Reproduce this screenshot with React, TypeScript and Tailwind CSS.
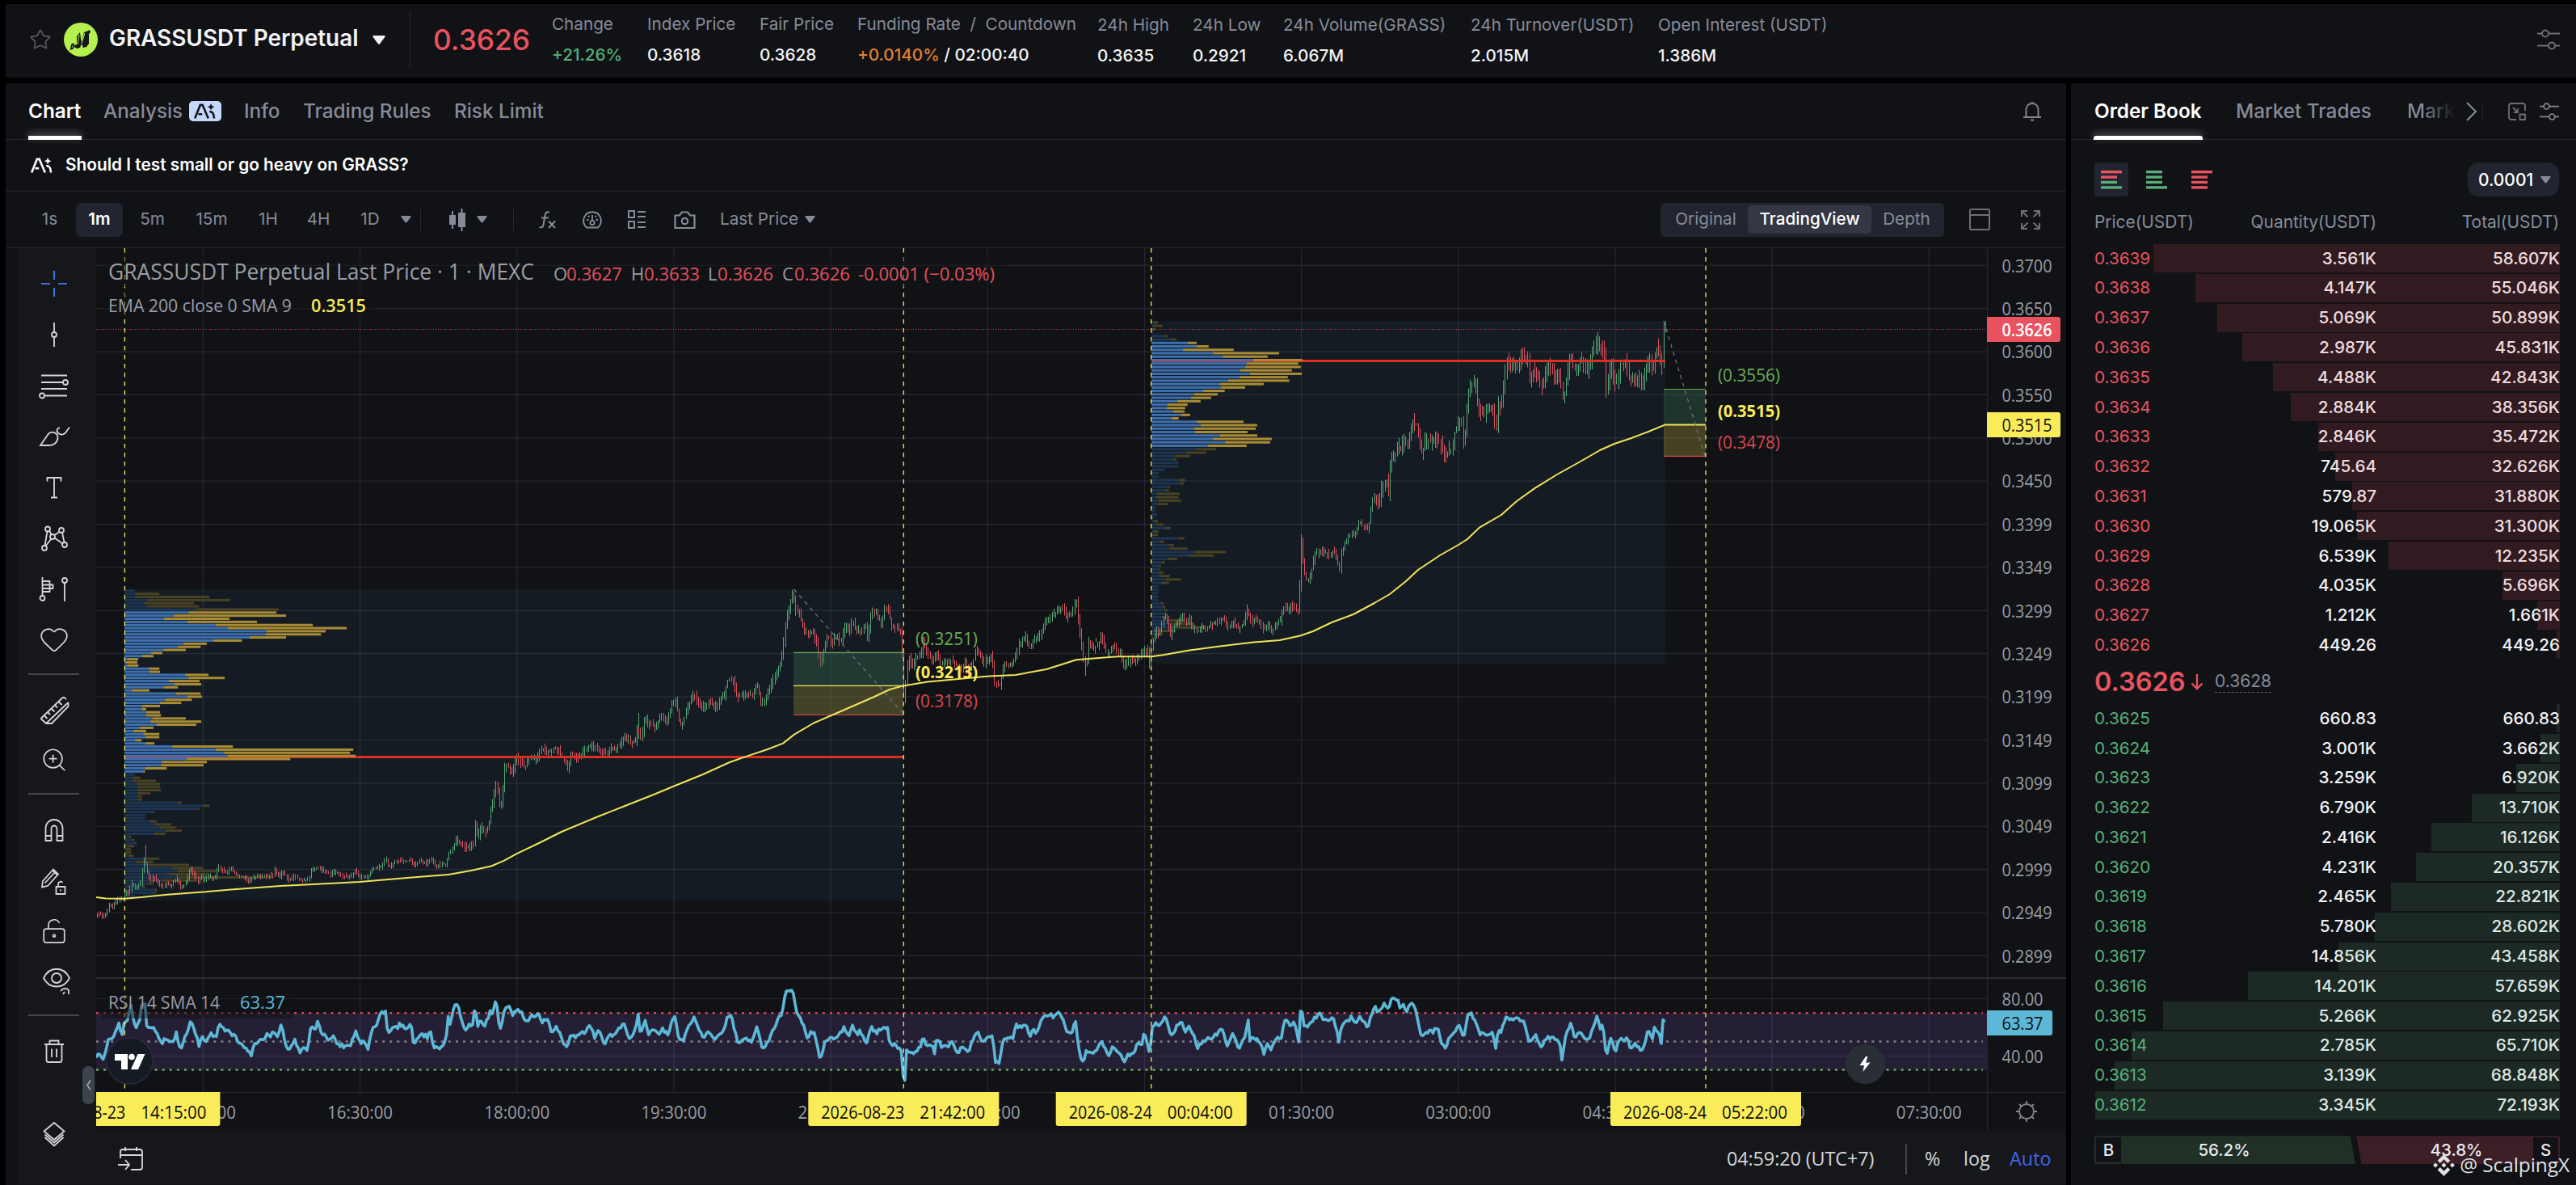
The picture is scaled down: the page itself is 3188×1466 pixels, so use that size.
import type { ReactNode } from 'react';
import { Heart, LockKeyholeOpen, Ruler, Star, ZoomIn } from 'lucide-react';
import clsx from 'clsx';

type Row = [price: string, qty: string, total: string, depth: number];
type Point = [number, number];

const STATS: { label: string; value: ReactNode; cls: string }[] = [
  { label: 'Change', value: <span className="text-[#56af78]">+21.26%</span>, cls: 'w-[118px]' },
  { label: 'Index Price', value: '0.3618', cls: 'w-[139px]' },
  { label: 'Fair Price', value: '0.3628', cls: 'w-[121px]' },
  {
    label: 'Funding Rate  /  Countdown',
    value: <><span className="text-[#e2812f]">+0.0140%</span>{' / '}02:00:40</>,
    cls: 'w-[297px]',
  },
  { label: '24h High', value: '0.3635', cls: 'w-[118px] pt-[1px]' },
  { label: '24h Low', value: '0.2921', cls: 'w-[112px] pt-[1px]' },
  { label: '24h Volume(GRASS)', value: '6.067M', cls: 'w-[232px] pt-[1px]' },
  { label: '24h Turnover(USDT)', value: '2.015M', cls: 'w-[232px] pt-[1px]' },
  { label: 'Open Interest (USDT)', value: '1.386M', cls: 'w-[260px] pt-[1px]' },
];

const INTERVALS = [
  { label: '1s', cls: 'w-[65px]' },
  { label: '1m', cls: 'w-[58px]', active: true },
  { label: '5m', cls: 'w-[73px]' },
  { label: '15m', cls: 'w-[74px]' },
  { label: '1H', cls: 'w-[66px]' },
  { label: '4H', cls: 'w-[58px]' },
  { label: '1D', cls: 'w-[70px]' },
];

const ASKS: Row[] = [
  ['0.3639', '3.561K', '58.607K', 503],
  ['0.3638', '4.147K', '55.046K', 451],
  ['0.3637', '5.069K', '50.899K', 424],
  ['0.3636', '2.987K', '45.831K', 393],
  ['0.3635', '4.488K', '42.843K', 355],
  ['0.3634', '2.884K', '38.356K', 333],
  ['0.3633', '2.846K', '35.472K', 299],
  ['0.3632', '745.64', '32.626K', 278],
  ['0.3631', '579.87', '31.880K', 257],
  ['0.3630', '19.065K', '31.300K', 251],
  ['0.3629', '6.539K', '12.235K', 212],
  ['0.3628', '4.035K', '5.696K', 71],
  ['0.3627', '1.212K', '1.661K', 28],
  ['0.3626', '449.26', '449.26', 4],
];

const BIDS: Row[] = [
  ['0.3625', '660.83', '660.83', 4],
  ['0.3624', '3.001K', '3.662K', 24],
  ['0.3623', '3.259K', '6.920K', 54],
  ['0.3622', '6.790K', '13.710K', 109],
  ['0.3621', '2.416K', '16.126K', 159],
  ['0.3620', '4.231K', '20.357K', 178],
  ['0.3619', '2.465K', '22.821K', 209],
  ['0.3618', '5.780K', '28.602K', 229],
  ['0.3617', '14.856K', '43.458K', 274],
  ['0.3616', '14.201K', '57.659K', 386],
  ['0.3615', '5.266K', '62.925K', 491],
  ['0.3614', '2.785K', '65.710K', 530],
  ['0.3613', '3.139K', '68.848K', 551],
  ['0.3612', '3.345K', '72.193K', 575],
];

/* ---------- chart data ---------- */

const parse = (s: string): Point[] =>
  s.trim().split(/\s+/).map((p) => p.split(',').map(Number) as Point);

const PRICE = parse(`
119,1132 122,1131 130,1134 133,1128 136,1119 141,1123 143,1117 149,1113 154,1112 157,1104 160,1107 164,1093 169,1100 175,1093 178,1072 180,1062 184,1082 187,1089 192,1085 196,1091 202,1097 208,1094 213,1096 220,1086 224,1100 229,1095 233,1087 237,1074 242,1084 246,1091 250,1085 254,1091 259,1085 267,1087 271,1072 278,1078 284,1080 286,1074 292,1082 302,1086 311,1090 316,1085 326,1085 339,1083 340,1076 347,1085 351,1080 359,1089 365,1085 373,1089 383,1090 386,1078 394,1074 402,1078 410,1082 414,1078 424,1084 435,1085 440,1078 446,1085 457,1085 460,1078 467,1074 472,1073 479,1064 482,1074 488,1069 495,1064 502,1066 510,1065 513,1072 520,1065 529,1069 535,1064 541,1073 547,1069 553,1070 556,1057 561,1050 566,1039 571,1044 577,1050 587,1044 589,1020 592,1037 597,1022 602,1029 605,1026 608,1007 611,992 614,973 616,966 619,996 622,998 624,975 625,953 629,946 635,956 641,938 651,951 655,938 665,940 672,926 679,930 686,926 692,928 698,938 704,951 708,931 714,937 721,933 728,926 736,923 742,928 751,933 757,927 767,925 773,913 784,920 788,916 790,900 795,915 799,885 804,896 813,900 819,886 826,896 832,873 837,868 842,893 846,896 851,878 860,860 865,870 872,876 880,869 887,877 893,866 898,860 901,843 908,840 913,863 922,860 934,859 938,845 943,870 950,863 957,843 964,830 968,819 971,795 974,765 977,755 981,738 983,735 985,755 990,759 997,785 1007,783 1012,795 1016,823 1020,808 1026,785 1030,798 1036,786 1041,795 1047,775 1052,783 1056,768 1061,780 1068,783 1071,770 1075,793 1079,758 1085,759 1092,773 1096,753 1100,755 1104,773 1111,778 1117,785 1119,865 1121,860 1123,830 1126,813 1130,825 1135,815 1141,810 1144,793 1148,808 1156,818 1160,810 1165,820 1172,818 1179,818 1186,825 1192,833 1195,815 1199,835 1204,823 1210,805 1219,820 1229,811 1232,845 1239,848 1243,825 1250,823 1257,818 1262,798 1271,788 1275,800 1281,793 1288,785 1296,765 1304,763 1311,753 1317,753 1320,764 1328,760 1333,742 1337,780 1342,815 1346,822 1348,793 1354,803 1360,798 1364,787 1369,806 1374,809 1378,798 1383,806 1388,806 1391,822 1395,824 1400,816 1405,820 1410,811 1416,806 1421,803 1424,821 1427,796 1430,787 1432,779 1435,786 1439,775 1442,761 1446,768 1450,787 1454,775 1460,771 1464,759 1468,771 1472,764 1477,777 1484,782 1488,775 1495,776 1502,772 1510,770 1516,764 1521,777 1527,770 1533,778 1540,773 1545,753 1548,764 1551,771 1554,766 1560,771 1565,780 1571,775 1576,782 1581,771 1586,768 1589,752 1593,752 1595,757 1600,749 1604,752 1609,762 1610,675 1612,665 1613,689 1615,707 1618,718 1622,716 1625,703 1628,687 1634,682 1642,685 1648,687 1652,680 1655,694 1659,705 1661,686 1665,673 1670,664 1675,659 1677,666 1680,655 1683,646 1688,652 1694,655 1697,641 1699,621 1702,614 1707,623 1712,600 1717,596 1719,614 1721,586 1724,564 1727,568 1731,550 1734,557 1739,546 1743,553 1746,532 1750,520 1753,528 1755,525 1757,543 1761,564 1765,546 1770,546 1776,545 1782,545 1786,557 1790,566 1794,557 1797,557 1801,536 1805,528 1809,514 1812,550 1815,528 1817,500 1820,479 1824,479 1827,471 1829,493 1832,511 1837,514 1843,509 1848,503 1850,514 1853,532 1855,503 1859,503 1862,479 1866,446 1870,461 1873,443 1876,457 1880,457 1883,437 1887,441 1892,446 1894,471 1899,457 1904,468 1909,480 1913,464 1919,453 1924,466 1929,462 1933,475 1936,496 1939,475 1942,457 1945,436 1948,452 1952,457 1958,446 1962,453 1965,464 1969,450 1973,436 1978,422 1981,432 1984,428 1987,443 1989,488 1992,466 1995,446 1999,475 2003,471 2007,446 2010,457 2013,446 2017,468 2023,468 2030,470 2035,475 2038,457 2042,446 2047,457 2049,441 2053,425 2055,439 2058,455 2060,402 2062,406`);

const EMA = `119,1111 131,1112.5 154,1112.8 175,1111 204,1108 251,1104.6 286,1101.6 347,1097 388,1095 445,1092 510,1086.6 555,1083 583,1078 608,1072.5 624,1065.7 639,1057.4 667,1044 695,1030 738,1012 771,999 809,984 833,974 870,959 903,944 927,935.6 950,928 969,920.6 983,909.6 1007,895.5 1029,886 1059,873 1082,863 1101,854 1118,849.4 1148,844.4 1186,841 1224,837.4 1257,836 1295,829 1332,817.3 1360,815 1383,813.3 1425,813.3 1441,811 1472,805.4 1508,800.7 1552,795.4 1584,793 1609,787.5 1625,782 1648,771 1675,761 1701,747 1720,736 1740,720 1755,706 1782,688 1805,675 1816,668 1831,653.6 1858,638 1877,621 1900,604.6 1927,588 1954,573 1980,558 1998,550 2019,543 2040,535 2061,526.4 2111,526.4`;

const RSI = parse(`
119,1310 122,1303 127,1311 131,1304 135,1282 138,1289 143,1276 147,1268 151,1280 154,1267 159,1261 162,1244 165,1265 169,1272 173,1265 175,1243 179,1241 182,1274 190,1272 196,1285 201,1293 204,1285 208,1287 212,1291 216,1289 219,1272 221,1295 225,1295 229,1282 233,1276 236,1261 240,1276 243,1282 246,1295 250,1285 255,1289 261,1280 267,1285 271,1265 274,1272 278,1276 284,1278 291,1284 296,1291 302,1297 308,1300 311,1308 314,1295 320,1287 326,1289 331,1280 335,1282 338,1276 343,1282 348,1270 353,1289 357,1302 361,1293 365,1289 371,1302 375,1295 380,1302 383,1287 385,1267 390,1276 393,1265 398,1278 402,1282 408,1289 413,1283 418,1293 424,1295 433,1295 441,1276 445,1291 450,1289 456,1302 459,1276 467,1269 472,1252 475,1256 477,1252 480,1282 486,1270 491,1274 495,1267 500,1272 509,1270 512,1295 516,1284 522,1280 529,1284 533,1276 536,1298 541,1298 547,1295 552,1287 555,1257 557,1267 562,1246 567,1244 571,1265 577,1276 580,1270 585,1269 588,1241 591,1270 595,1261 599,1272 604,1261 607,1250 609,1254 614,1237 617,1265 620,1272 625,1249 629,1246 635,1256 642,1249 651,1265 657,1259 666,1256 671,1264 679,1264 683,1281 689,1270 695,1286 702,1299 706,1279 714,1284 721,1279 731,1270 736,1284 742,1276 749,1294 754,1281 761,1281 766,1274 772,1264 778,1286 785,1279 790,1256 793,1284 798,1261 802,1279 809,1276 814,1281 820,1274 826,1281 835,1256 840,1289 846,1289 851,1271 859,1261 864,1271 871,1286 877,1276 885,1289 891,1279 897,1274 899,1261 904,1256 909,1274 913,1291 922,1286 931,1289 937,1269 942,1296 949,1294 956,1276 962,1264 968,1254 972,1230 979,1226 982,1228 985,1251 992,1264 999,1284 1007,1276 1011,1294 1015,1312 1020,1294 1026,1284 1033,1288 1039,1281 1045,1270 1050,1284 1055,1269 1060,1281 1064,1276 1072,1290 1078,1271 1085,1279 1093,1271 1099,1273 1101,1291 1108,1294 1116,1301 1118,1338 1120,1336 1122,1301 1130,1304 1139,1296 1143,1284 1147,1294 1154,1295 1157,1309 1159,1286 1165,1295 1172,1296 1179,1291 1185,1303 1192,1294 1198,1304 1205,1286 1210,1276 1216,1291 1223,1284 1229,1284 1232,1317 1237,1314 1242,1286 1254,1284 1258,1268 1264,1274 1270,1268 1275,1284 1279,1274 1283,1279 1290,1261 1295,1255 1304,1259 1311,1254 1315,1259 1320,1280 1328,1276 1331,1261 1335,1299 1340,1316 1345,1299 1350,1306 1360,1296 1363,1288 1372,1306 1377,1296 1384,1304 1392,1314 1397,1305 1403,1305 1407,1293 1413,1293 1416,1280 1419,1290 1423,1305 1426,1272 1431,1264 1435,1272 1442,1255 1445,1269 1451,1285 1455,1272 1463,1265 1467,1280 1471,1272 1478,1285 1482,1296 1490,1288 1499,1284 1513,1275 1519,1296 1526,1280 1533,1299 1540,1285 1545,1263 1547,1288 1552,1284 1559,1291 1564,1304 1568,1291 1573,1301 1577,1288 1586,1283 1590,1262 1595,1268 1602,1267 1605,1279 1608,1292 1610,1236 1613,1267 1618,1274 1625,1262 1634,1256 1637,1264 1643,1262 1651,1261 1657,1290 1660,1269 1668,1264 1673,1259 1677,1267 1683,1258 1688,1264 1693,1272 1697,1256 1702,1247 1706,1254 1713,1242 1718,1250 1723,1235 1730,1239 1733,1247 1737,1242 1740,1254 1747,1240 1752,1248 1756,1269 1760,1285 1768,1277 1774,1277 1777,1272 1781,1278 1785,1293 1789,1297 1796,1280 1801,1280 1806,1267 1811,1288 1816,1259 1819,1254 1826,1262 1831,1280 1840,1281 1848,1277 1851,1301 1854,1276 1858,1276 1864,1257 1872,1264 1876,1261 1885,1262 1889,1275 1893,1293 1900,1280 1907,1296 1914,1284 1923,1284 1930,1291 1933,1313 1936,1291 1940,1277 1944,1266 1948,1285 1956,1277 1962,1288 1969,1281 1973,1265 1977,1259 1980,1276 1983,1269 1986,1285 1988,1315 1990,1296 1993,1285 1997,1295 2000,1301 2003,1287 2007,1284 2010,1292 2014,1285 2018,1300 2024,1293 2030,1301 2035,1296 2039,1277 2045,1285 2047,1273 2053,1276 2056,1291 2058,1265 2062,1266`);

/* Volume profile rows: end of the up part, end of the whole bar */
const PROFILES = [
  {
    x: 154, top: 730, step: 3.855, base: 377, scale: 2.45, area: [7, 58],
    rows: parse(`409,409 409,483 409,635 446,698 434,588 446,603 593,845 571,838 527,867 497,696 568,779 654,948 691,1051 808,987 804,973 755,867 647,733 556,627 539,608 495,563 458,492 431,465 385,419 380,416 385,419 451,483 453,485 561,632 571,681 512,605 529,610 495,539 399,453 532,608 568,612 500,581 483,549 431,485 429,443 443,485 443,488 461,563 456,610 475,595 424,465 404,443 434,483 441,483 409,429 441,468 522,706 654,1071 679,1061 691,1078 566,880 490,627 488,617 439,505 434,439 409,409 402,426 402,473 414,485 416,485 416,488 416,456 416,431 416,431 537,551 617,635 600,605 470,470 441,441 441,441 453,475 470,519 483,532 500,551 468,502 390,397 399,407 409,414 385,407 380,397 380,397 390,404 446,483 412,465 451,573 522,615 537,654 507,632 546,823 488,598 448,465 431,439 470,475 468,473 409,409 380,380`),
  },
  {
    x: 1425, top: 398, step: 4.241, base: 118, scale: 2.613, area: [6, 36],
    rows: parse(`124,139 123,154 120,131 124,124 159,170 180,199 235,264 264,303 220,384 316,531 348,494 447,606 426,593 421,601 405,572 436,604 402,559 366,564 337,481 342,421 285,355 256,332 246,311 201,277 170,235 167,227 188,225 214,243 183,206 264,416 277,460 256,455 259,429 340,460 316,507 355,502 301,426 264,327 230,295 193,243 191,199 206,206 206,206 162,162 141,141 141,141 206,227 212,222 172,178 165,175 136,209 131,206 141,214 139,170 131,131 131,131 136,136 126,126 125,139 133,157 162,180 123,141 120,139 206,225 144,159 172,191 178,235 256,358 238,319 172,201 152,162 144,149 144,146 141,157 144,178 165,214 149,175 141,141 141,141 141,141 141,141 141,141 149,157 154,162 160,170 165,168 152,165 178,227 180,253 198,293 152,196 133,154 118,123`),
  },
];

const GRID_Y = Array.from({ length: 17 }, (_, i) => 329.3 + i * 53.38);
const GRID_X = Array.from({ length: 12 }, (_, i) => 251.4 + i * 194.17);
const PRICE_TICKS = ['0.3700', '0.3650', '0.3600', '0.3550', '0.3500', '0.3450', '0.3399', '0.3349', '0.3299', '0.3249', '0.3199', '0.3149', '0.3099', '0.3049', '0.2999', '0.2949', '0.2899'];
const TIME_TICKS = ['15:00:00', '16:30:00', '18:00:00', '19:30:00', '21:00:00', '22:30:00', '', '01:30:00', '03:00:00', '04:30:00', '06:00:00', '07:30:00'];
const MARKERS = [
  { x: 154.4, date: '2026-08-23', time: '14:15:00' },
  { x: 1118.3, date: '2026-08-23', time: '21:42:00' },
  { x: 1424.7, date: '2026-08-24', time: '00:04:00' },
  { x: 2111, date: '2026-08-24', time: '05:22:00' },
];

function valueAt(points: Point[], x: number) {
  for (let i = 1; i < points.length; i++) {
    if (x <= points[i][0]) {
      const [x0, y0] = points[i - 1];
      const [x1, y1] = points[i];
      return y0 + ((y1 - y0) * (x - x0)) / (x1 - x0);
    }
  }
  return points[points.length - 1][1];
}

// small deterministic noise so that the bars stay the same on each render
function noise(i: number) {
  const v = Math.sin(i * 127.1 + 3.7) * 43758.5453;
  return v - Math.floor(v);
}

function buildBars() {
  let up = '';
  let down = '';
  for (let i = 0; i < 901; i++) {
    const x = 120 + i * 2.157;
    const open = valueAt(PRICE, x - 1.1);
    const close = valueAt(PRICE, x + 1.1);
    const amp = x < 560 ? 4 : x < 1430 ? 7 : x < 1700 ? 6 : 12;
    const top = Math.min(open, close) - noise(i) * amp;
    const bottom = Math.max(open, close) + 1 + noise(i + 2000) * amp;
    const seg = `M${Math.floor(x) + 0.5} ${Math.max(top, 398).toFixed(1)}V${bottom.toFixed(1)}`;
    if (close - open + (noise(i + 5000) - 0.5) * 4 < 0) up += seg;
    else down += seg;
  }
  // the two tall wicks
  down += 'M180.5 1046V1072';
  up += 'M340.5 1073V1086M1343.5 815V837M790.5 883V915M1356.5 790V795';
  return { up, down };
}

function buildRsi() {
  const out = [];
  for (let i = 0; i < 901; i++) {
    const x = 119 + i * 2.157;
    out.push(`${x.toFixed(1)},${(valueAt(RSI, x) + (noise(i + 900) - 0.5) * 5).toFixed(1)}`);
  }
  return out.join(' ');
}

const BARS = buildBars();
const RSI_LINE = buildRsi();

/* ---------- small pieces ---------- */

function Caret({ className = 'h-[9px] w-[13px]' }: { className?: string }) {
  return (
    <svg viewBox="0 0 14 10" className={className} fill="currentColor">
      <path d="M1 0h12c.9 0 1.2.9.7 1.5L8 9.300c-.5.7-1.500.7-2 0L.3 1.500C-.2.9.1 0 1 0z" />
    </svg>
  );
}

function Sliders({ className }: { className?: string }) {
  return (
    <svg viewBox="0 0 28 28" className={className} fill="none" stroke="currentColor" strokeWidth="2">
      <path d="M0 6.500h6M14 6.500h14M0 21.500h14M22 21.500h6" />
      <circle cx="10" cy="6.500" r="4" />
      <circle cx="18" cy="21.500" r="4" />
    </svg>
  );
}

function AiMark({ className }: { className?: string }) {
  return (
    <svg viewBox="0 0 30 20" className={className} fill="none" stroke="currentColor" strokeWidth="2.700">
      <path d="M1.500 19.500L8.500 2h3l7.500 17.500M6 14h5M20.500 10.500c3.500 0 6 3 6 9" />
      <path d="M22.500 0l1.500 3.200L27.200 4.500 24 5.800 22.500 9 21 5.800 17.800 4.500 21 3.200z" fill="currentColor" stroke="none" />
    </svg>
  );
}

function Tool({ children, className = 'text-[#d5d6da]' }: { children: ReactNode; className?: string }) {
  return (
    <svg viewBox="0 0 40 40" className={clsx('h-[40px] w-[40px]', className)} fill="none" stroke="currentColor" strokeWidth="1.8">
      {children}
    </svg>
  );
}

function ToolDivider({ className }: { className: string }) {
  return (
    <div className={clsx('flex items-center justify-center', className)}>
      <div className="h-[2px] w-[63px] bg-[#46474c]" />
    </div>
  );
}

function DrawingTools() {
  return (
    <div className="flex h-[1158px] w-[98px] shrink-0 flex-col bg-[#16171b] pr-[7px] pt-[13px] text-[#d5d6da]">
      <div className="flex h-[501px] flex-col items-center justify-around">
        <Tool className="text-[#3f6fd8]">
          <path d="M20 4v11M20 25v11M4 20h11M25 20h11" strokeWidth="2.200" />
        </Tool>
        <Tool>
          <path d="M20 5v12M20 23v12" />
          <circle cx="20" cy="20" r="3" />
        </Tool>
        <Tool>
          <path d="M4 7.500h32M4 16h27M4 24h32M8 32.500h28" />
          <circle cx="34" cy="16" r="3" />
          <circle cx="5" cy="32.500" r="3" />
        </Tool>
        <Tool>
          <path d="M3 31l9-13c4-6 13-3 12.500 4C24 28 19 31 14 31zM27 9c-4 1-5 5-1 7.500 3 2 6 1 8-1L39 8.500" />
        </Tool>
        <Tool>
          <path d="M11.500 12.500v-4.500h17v4.500M20 8v24.500M16 32.500h8" />
        </Tool>
        <Tool>
          <path d="M11.500 11.500L8.500 29M14 10.500l3 5.500M20.500 16l6-4M30 13l2.500 12M16.500 20.500L9.500 29.500M20.500 19.500l10 7" />
          <circle cx="12" cy="8.500" r="3" />
          <circle cx="29" cy="10" r="3" />
          <circle cx="18" cy="18" r="3" />
          <circle cx="33" cy="28" r="3" />
          <circle cx="8" cy="32" r="3" />
        </Tool>
        <Tool>
          <path d="M5.500 5v23M5.500 10h9v13h-9M5.500 14.500h13v4.500h-13M33 12v23" />
          <circle cx="5.500" cy="31" r="3" />
          <circle cx="33" cy="9" r="3" />
        </Tool>
        <Heart className="h-[38px] w-[40px]" strokeWidth={1.1} />
      </div>
      <ToolDivider className="h-[26px]" />
      <div className="flex h-[122px] flex-col items-center justify-around">
        <Tool>
          <path d="M3.500 30L30 4.500c2-1.500 4.500-.5 4.500 2M10 36L37.500 10M37.500 10v5L17 36h-7l-6.500-6M7.500 26l4 4M12 22l3 3M16.500 17.500l4 4M21 13.500l3 3M25.500 9l4 4" />
        </Tool>
        <ZoomIn className="h-[34px] w-[34px]" strokeWidth={1.2} />
      </div>
      <ToolDivider className="h-[26px]" />
      <div className="flex h-[250px] flex-col items-center justify-around">
        <Tool>
          <path d="M9.500 33V17.500a10.500 10.500 0 0121 0V33h-7V18a3.500 3.500 0 00-7 0v15zM9.500 27h7M23.500 27h7" />
        </Tool>
        <Tool>
          <path d="M6 19L19 4.500l6 6L12 25l-7 1.500zM8.500 21.500L21 8M18 5.500l5.500 5.500M22.500 26h11v9h-11zM25 26v-3.500a3 3 0 015.500-1.500M28 29.500v2" />
        </Tool>
        <LockKeyholeOpen className="h-[34px] w-[34px]" strokeWidth={1.2} />
        <Tool>
          <path d="M7 17c7-15 25-15 32 0-7 14-25 14-32 0z" />
          <circle cx="23" cy="17" r="6" />
          <path d="M28 33c3-4 7-4 10-1M31 37l2-3M38 32v5" />
        </Tool>
      </div>
      <ToolDivider className="h-[22px]" />
      <div className="flex h-[68px] items-center justify-center">
        <Tool>
          <path d="M8 11h24M14.500 11V6.500h11V11M10.500 11v19.500a2.500 2.500 0 002.500 2.500h14a2.500 2.500 0 002.500-2.500V11M17 16.500V27M23 16.500V27" />
        </Tool>
      </div>
      <div className="mt-[48px] flex justify-center">
        <Tool>
          <path d="M20 6l12.500 10.500L20 27 7.500 16.500zM8.500 20.500L20 30.500l11.500-10M8.500 24L20 34.500 31.500 24" />
        </Tool>
      </div>
    </div>
  );
}

function VolumeProfile({ profile }: { profile: (typeof PROFILES)[number] }) {
  return (
    <g>
      {profile.rows.map(([up, all], i) => {
        const inArea = i >= profile.area[0] && i <= profile.area[1];
        const y = profile.top + i * profile.step + 0.3;
        const upWidth = (up - profile.base) / profile.scale;
        const allWidth = (all - profile.base) / profile.scale;
        return (
          <g key={i}>
            <rect x={profile.x} y={y} width={upWidth} height={3} fill={inArea ? '#3e70b0' : '#1d3550'} />
            <rect x={profile.x + upWidth} y={y} width={allWidth - upWidth} height={3} fill={inArea ? '#a98c35' : '#484224'} />
          </g>
        );
      })}
    </g>
  );
}

function PriceChart() {
  return (
    <svg viewBox="119 308 2438 1092" className="block h-[1092px] w-[2438px] font-['Open_Sans',sans-serif]">
      <rect x="154" y="730" width="964" height="385.500" fill="#141b22" />
      <rect x="1425" y="398" width="636" height="424" fill="#141b22" />
      <rect x="119" y="1254.300" width="2340" height="70.500" fill="#251f36" />

      <g stroke="#8c96b0" strokeOpacity="0.17" strokeWidth="1.200">
        {GRID_Y.map((y) => <line key={y} x1="119" x2="2459" y1={y} y2={y} />)}
        <line x1="119" x2="2459" y1="1236.500" y2="1236.500" />
        <line x1="119" x2="2459" y1="1307.500" y2="1307.500" />
        {GRID_X.map((x) => <line key={x} x1={x} x2={x} y1="308" y2="1352" />)}
        <line x1="2459.500" x2="2459.500" y1="308" y2="1400" />
        <line x1="119" x2="2557" y1="1352.500" y2="1352.500" />
      </g>
      <rect x="119" y="1210" width="2438" height="2" fill="#2b2d33" />

      <rect x="154" y="936" width="964" height="3" fill="#dc2f20" />
      <rect x="1425" y="446" width="636" height="3" fill="#dc2f20" />
      {PROFILES.map((p) => <VolumeProfile key={p.x} profile={p} />)}

      <path d={BARS.up} stroke="#56a876" strokeWidth="1" />
      <path d={BARS.down} stroke="#d9535f" strokeWidth="1" />
      <rect x="440" y="936" width="678" height="3" fill="#dc2f20" />
      <rect x="1612" y="446" width="449" height="3" fill="#dc2f20" />

      {/* fib boxes */}
      <rect x="982" y="808" width="136" height="41.500" fill="#30604a" fillOpacity="0.45" />
      <rect x="982" y="849.500" width="136" height="36" fill="#8a7c33" fillOpacity="0.4" />
      <line x1="982" x2="1118" y1="808.300" y2="808.300" stroke="#69ad55" strokeWidth="1.200" />
      <line x1="982" x2="1118" y1="849.400" y2="849.400" stroke="#f8ea5a" strokeWidth="1.200" />
      <line x1="982" x2="1118" y1="885.500" y2="885.500" stroke="#df4a45" strokeWidth="1.200" />
      <rect x="2059" y="482.500" width="52" height="44" fill="#30604a" fillOpacity="0.45" />
      <rect x="2059" y="526.500" width="52" height="39" fill="#8a7c33" fillOpacity="0.45" />
      <line x1="2059" x2="2111" y1="482.500" y2="482.500" stroke="#69ad55" strokeWidth="1.200" />
      <line x1="2059" x2="2111" y1="565.400" y2="565.400" stroke="#df4a45" strokeWidth="1.200" />
      <polyline points={EMA} fill="none" stroke="#efe45c" strokeWidth="2" strokeLinejoin="round" />
      <g stroke="#73767c" strokeWidth="1.200" strokeDasharray="5 5">
        <line x1="982.500" y1="730" x2="1118" y2="884" />
        <line x1="2059" y1="398" x2="2110" y2="565" />
      </g>

      <line x1="119" x2="2459" y1="408.500" y2="408.500" stroke="#c94853" strokeWidth="1" strokeDasharray="1 2" />

      {/* RSI pane */}
      <g strokeWidth="2.600" strokeDasharray="3 6.080">
        <line x1="119" x2="2454" y1="1254.300" y2="1254.300" stroke="#d9474d" />
        <line x1="119" x2="2454" y1="1289.500" y2="1289.500" stroke="#7f8086" />
        <line x1="119" x2="2454" y1="1324.500" y2="1324.500" stroke="#6dab59" />
      </g>
      <polyline points={RSI_LINE} fill="none" stroke="#5cb8d6" strokeWidth="3.600" strokeLinejoin="round" />

      {MARKERS.map((m) => (
        <line key={m.x} x1={m.x} x2={m.x} y1="308" y2="1352" stroke="#f8ea5a" strokeWidth="1.300" strokeDasharray="5.500 5.500" />
      ))}

      <g fontSize="21">
        <g fill="#69ad55">
          <text x="1133" y="799" textLength="77" lengthAdjust="spacingAndGlyphs">(0.3251)</text>
          <text x="2126" y="473" textLength="77" lengthAdjust="spacingAndGlyphs">(0.3556)</text>
        </g>
        <g fill="#f8ea5a" fontWeight="700">
          <text x="1133" y="839.500" textLength="77" lengthAdjust="spacingAndGlyphs">(0.3213)</text>
          <text x="2126" y="517" textLength="77" lengthAdjust="spacingAndGlyphs">(0.3515)</text>
        </g>
        <g fill="#d9474d">
          <text x="1133" y="876" textLength="77" lengthAdjust="spacingAndGlyphs">(0.3178)</text>
          <text x="2126" y="556" textLength="77" lengthAdjust="spacingAndGlyphs">(0.3478)</text>
        </g>
      </g>

      {/* legends */}
      <g fill="#111216" fillOpacity="0.5">
        <rect x="126" y="316" width="1120" height="40" />
        <rect x="126" y="361" width="340" height="34" />
        <rect x="126" y="1226" width="237" height="35" />
      </g>
      <text x="134" y="347" fontSize="27" fill="#9a9da5" textLength="527" lengthAdjust="spacingAndGlyphs">
        GRASSUSDT Perpetual Last Price · 1 · MEXC
      </text>
      <g fontSize="22">
        <g fill="#9a9da5">
          <text x="685" y="348">O</text>
          <text x="781" y="348">H</text>
          <text x="876" y="348">L</text>
          <text x="968" y="348">C</text>
        </g>
        <g fill="#e5515d">
          <text x="701" y="348" textLength="69" lengthAdjust="spacingAndGlyphs">0.3627</text>
          <text x="797" y="348" textLength="69" lengthAdjust="spacingAndGlyphs">0.3633</text>
          <text x="888" y="348" textLength="69" lengthAdjust="spacingAndGlyphs">0.3626</text>
          <text x="983" y="348" textLength="69" lengthAdjust="spacingAndGlyphs">0.3626</text>
          <text x="1062" y="348" textLength="169" lengthAdjust="spacingAndGlyphs">-0.0001 (−0.03%)</text>
        </g>
        <text x="134" y="386.500" fill="#9a9da5" textLength="227" lengthAdjust="spacingAndGlyphs">EMA 200 close 0 SMA 9</text>
        <text x="385" y="386.500" fill="#f8ea5a" fontWeight="600" textLength="68" lengthAdjust="spacingAndGlyphs">0.3515</text>
        <text x="134" y="1248.500" fill="#9a9da5" textLength="138" lengthAdjust="spacingAndGlyphs">RSI 14 SMA 14</text>
        <text x="297" y="1248.500" fill="#5cb8d6" textLength="56" lengthAdjust="spacingAndGlyphs">63.37</text>
      </g>

      {/* axes */}
      <g fontSize="21" fill="#9a9da5">
        {PRICE_TICKS.map((t, i) => (
          <text key={t} x="2477.500" y={GRID_Y[i] + 8.2} textLength="62" lengthAdjust="spacingAndGlyphs">{t}</text>
        ))}
        <text x="2477.500" y="1244.500" textLength="51" lengthAdjust="spacingAndGlyphs">80.00</text>
        <text x="2477.500" y="1315.500" textLength="51" lengthAdjust="spacingAndGlyphs">40.00</text>
        {TIME_TICKS.map((t, i) => t && (
          <text key={t} x={GRID_X[i] - 40.5} y="1384.500" textLength="81" lengthAdjust="spacingAndGlyphs">{t}</text>
        ))}
      </g>
      <path d="M2459 393h88a3 3 0 013 3v25a3 3 0 01-3 3h-88z" fill="#e8535f" />
      <path d="M2459 511h88a3 3 0 013 3v25a3 3 0 01-3 3h-88z" fill="#faec59" />
      <path d="M2459 1251h78a3 3 0 013 3v25a3 3 0 01-3 3h-78z" fill="#5cb8d6" />
      <g fontSize="21">
        <text x="2477.500" y="416.500" fill="#fff" fontWeight="600" textLength="62" lengthAdjust="spacingAndGlyphs">0.3626</text>
        <text x="2477.500" y="534.500" fill="#111216" textLength="62" lengthAdjust="spacingAndGlyphs">0.3515</text>
        <text x="2477.500" y="1274.500" fill="#111216" textLength="51" lengthAdjust="spacingAndGlyphs">63.37</text>
      </g>
      {MARKERS.map((m) => (
        <g key={m.x} fontSize="21" fill="#0c0d10">
          <path d={`M${m.x - 118} 1352h236v39a3 3 0 01-3 3h-230a3 3 0 01-3-3z`} fill="#faec59" />
          <text x={m.x - 102} y="1384.500" textLength="103" lengthAdjust="spacingAndGlyphs">{m.date}</text>
          <text x={m.x + 20} y="1384.500" textLength="81" lengthAdjust="spacingAndGlyphs">{m.time}</text>
        </g>
      ))}

      {/* axis settings */}
      <g fill="none" stroke="#85878d" strokeWidth="1.800">
        <circle cx="2508" cy="1376" r="9" />
        <path d="M2508 1363v4M2508 1385v4M2495 1376h4M2517 1376h4M2499 1367l3 3M2514 1382l3 3M2499 1385l3-3M2514 1370l3-3" />
      </g>

      <circle cx="160.500" cy="1313.500" r="28.500" fill="#151b22" stroke="#2b2740" strokeWidth="1.500" />
      <path d="M142 1305h16v19h-8v-11h-8zM170.500 1305h9l-8.500 19h-9z" fill="#fff" />
      <circle cx="163" cy="1308.500" r="3.800" fill="#fff" />

      <circle cx="2308.500" cy="1317.500" r="24.500" fill="#2a2e37" />
      <path d="M2309 1308l-7.500 11h5.500l-1.500 8 9-11.500h-5.500l2.500-7.500z" fill="#fff" />
    </svg>
  );
}

function BookRow({ row, side }: { row: Row; side: 'ask' | 'bid' }) {
  const [price, qty, total, depth] = row;
  return (
    <div className="relative flex h-[36.8px] items-center pb-[1px] text-[20.7px] font-medium leading-none text-[#f3f4f6]">
      <span className={clsx('w-[120px] font-normal', side === 'ask' ? 'text-[#e8535f]' : 'text-[#56af78]')}>{price}</span>
      <span className="w-[229px] text-right">{qty}</span>
      <span className="w-[227px] text-right">{total}</span>
      <div
        className={clsx('absolute right-0 top-0 h-[35px]', side === 'ask' ? 'bg-[#e8535f]/15' : 'bg-[#61ad80]/15')}
        style={{ width: depth }}
      />
    </div>
  );
}

function BookIcon({ bars }: { bars: string[] }) {
  return (
    <svg viewBox="0 0 26 23" className="h-[23px] w-[26px]">
      {bars.map((b, i) => {
        const [w, side] = b.split(' ');
        return <rect key={i} y={i * 6.4} width={w} height="3.400" fill={side === 'r' ? '#e8535f' : '#56af78'} />;
      })}
    </svg>
  );
}

function OrderBook() {
  return (
    <aside className="relative flex w-[625px] shrink-0 flex-col bg-[#111216]">
      <div className="flex h-[70px] items-center border-b border-[#26282d] pl-[29px] text-[24.3px] font-medium leading-none text-[#868b98]">
        <div className="relative flex h-full w-[175px] items-center font-semibold text-white">
          Order Book
          <div className="absolute -bottom-px left-[-1px] h-[5px] w-[135px] rounded-t-[3px] bg-white shadow-[0_-3px_10px_rgba(255,255,255,0.35)]" />
        </div>
        <span className="w-[212px]">Market Trades</span>
        <span className="w-[60px] bg-gradient-to-r from-[#868b98] from-30% to-[#111216] bg-clip-text whitespace-nowrap text-transparent">Mark</span>
        <svg viewBox="0 0 14 24" className="ml-[13px] h-[24px] w-[14px]" fill="none" stroke="currentColor" strokeWidth="2">
          <path d="M1 1l11 11L1 23" />
        </svg>
        <div className="ml-[6px] h-[18px] w-px bg-[#26282d]" />
        <svg viewBox="0 0 22 22" className="ml-[31px] h-[22px] w-[22px] text-[#6d6f75]" fill="none" stroke="currentColor" strokeWidth="1.800">
          <path d="M10 21H4a3 3 0 01-3-3V4a3 3 0 013-3h14a3 3 0 013 3v6M6 6l6 6M12 7v5H7M14.500 14.500h6.500V21h-6.500z" />
        </svg>
        <Sliders className="ml-[17px] h-[24px] w-[24px] text-[#85878d]" />
      </div>

      <div className="mt-[28px] flex h-[42px] items-center pl-[29px]">
        <div className="flex h-[42px] w-[42px] items-center justify-center rounded-[4px] bg-[#22252f]">
          <BookIcon bars={['26 r', '20 r', '20 g', '26 g']} />
        </div>
        <div className="flex w-[70px] justify-center"><BookIcon bars={['20 g', '20 g', '20 g', '26 g']} /></div>
        <div className="flex w-[42px] justify-center"><BookIcon bars={['26 r', '20 r', '20 r', '20 r']} /></div>
        <div className="ml-auto mr-[21px] flex h-[42px] w-[113px] items-center rounded-[14px] bg-[#22252f] pl-[13px] text-[21px] font-medium leading-none text-white">
          <span className="w-[77px]">0.0001</span>
          <Caret className="h-[9px] w-[13px] text-[#868b98]" />
        </div>
      </div>

      <div className="mt-[18px] flex h-[28px] items-center pl-[29px] text-[20.9px] leading-none text-[#868b98]">
        <span className="w-[120px]">Price(USDT)</span>
        <span className="w-[229px] text-right">Quantity(USDT)</span>
        <span className="w-[226px] text-right">Total(USDT)</span>
      </div>

      <div className="mt-[13px] w-[605px] pl-[29px]">
        {ASKS.map((r) => <BookRow key={r[0]} row={r} side="ask" />)}
      </div>

      <div className="flex h-[54px] items-center pl-[29px] leading-none">
        <span className="w-[119px] text-[32.500px] font-semibold text-[#e8535f]">0.3626</span>
        <svg viewBox="0 0 16 20" className="h-[20px] w-[16px] text-[#e8535f]" fill="none" stroke="currentColor" strokeWidth="2.400">
          <path d="M8 0v18M1.500 11.500L8 18l6.500-6.500" />
        </svg>
        <span className="ml-[14px] border-b border-dashed border-[#5c606a] pb-[3px] text-[21px] text-[#868b98]">0.3628</span>
      </div>

      <div className="w-[605px] pl-[29px]">
        {BIDS.map((r) => <BookRow key={r[0]} row={r} side="bid" />)}
      </div>

      <div className="mt-[19px] flex h-[35px] w-[605px] pl-[29px] text-[20.5px] font-medium leading-none text-[#e9eaec]">
        <div className="flex w-[323px] items-center rounded-l-[3px] bg-[#203027] pl-[2px] [clip-path:polygon(0_0,98%_0,100%_100%,0_100%)]">
          <span className="flex h-[31px] w-[31px] items-center justify-center bg-[#111216]">B</span>
          <span className="w-[255px] text-center">56.2%</span>
        </div>
        <div className="flex w-[253px] items-center rounded-r-[3px] bg-[#3c1f26] pr-[2px] [clip-path:polygon(0.400%_0,100%_0,100%_100%,3%_100%)]">
          <span className="w-[220px] pl-[30px] text-center">43.8%</span>
          <span className="flex h-[31px] w-[31px] items-center justify-center bg-[#111216]">S</span>
        </div>
      </div>

      <div className="absolute bottom-[11px] right-[8px] flex items-center leading-none text-[#dfe0e2]">
        <svg viewBox="0 0 26 26" className="mr-[6px] h-[27px] w-[27px]" fill="currentColor">
          <path d="M13 0l7.500 7.500-3 3L13 6l-4.500 4.500-3-3zM13 26l-7.500-7.500 3-3L13 20l4.500-4.500 3 3zM3 10l3 3-3 3-3-3zM23 10l3 3-3 3-3-3zM13 10l3 3-3 3-3-3z" />
        </svg>
        <span className="font-['Open_Sans',sans-serif] text-[24.500px] tracking-[-0.1px]">@ ScalpingX</span>
      </div>
    </aside>
  );
}

function ChartToolbar() {
  return (
    <div className="flex h-[70px] items-center border-b border-[#26282d] pl-[22px] text-[20.7px] leading-none text-[#868b98]">
      {INTERVALS.map((i) => (
        <span
          key={i.label}
          className={clsx('flex h-[42px] items-center justify-center', i.cls, i.active && 'rounded-[7px] bg-[#22252f] font-semibold text-white')}
        >
          {i.label}
        </span>
      ))}
      <Caret className="ml-[3px] h-[9px] w-[13px]" />
      <div className="ml-[11px] h-[28px] w-px bg-[#26282d]" />
      <svg viewBox="0 0 20 28" className="ml-[35px] h-[28px] w-[20px]" fill="currentColor">
        <path d="M0 8h8v12H0zM3 3h2v22H3zM11 5h9v18h-9zM14.500 0h2v28h-2z" />
      </svg>
      <Caret className="ml-[14px] h-[9px] w-[13px]" />
      <div className="ml-[32px] h-[28px] w-px bg-[#26282d]" />
      <svg viewBox="0 0 22 22" className="ml-[31px] h-[22px] w-[22px]" fill="none" stroke="currentColor" strokeWidth="2">
        <path d="M13 1.500c-4-1-5 1-5.500 4L5.500 17c-.5 3-2 4-5 3M3 8.500h9M12 12.500l8 8.500M20 12.500l-8 8.500" />
      </svg>
      <svg viewBox="0 0 24 22" className="ml-[32px] h-[22px] w-[24px]" fill="none" stroke="currentColor" strokeWidth="1.900">
        <path d="M5 20.500C-2.500 13 2 1.200 12 1.200S26.500 13 19 20.500zM12 5v7M5 11h2.500M16.500 11H19M7 6l1.500 1.500M17 6l-1.500 1.500" />
        <circle cx="12" cy="14.500" r="2.600" />
      </svg>
      <svg viewBox="0 0 22 23" className="ml-[32px] h-[23px] w-[22px]" fill="none" stroke="currentColor" strokeWidth="2">
        <path d="M1 1h7v8H1zM1 14h7v8H1zM12 2h10M12 8h10M12 15h10M12 21h10" />
      </svg>
      <svg viewBox="0 0 27 22" className="ml-[35px] h-[22px] w-[27px]" fill="none" stroke="currentColor" strokeWidth="2.200">
        <path d="M1.500 5.500h5.500l3-4h7l3 4h5.500V21h-24z" />
        <circle cx="13.500" cy="12.500" r="3.700" />
      </svg>
      <span className="ml-[30px] w-[105px] whitespace-nowrap">Last Price</span>
      <Caret className="h-[9px] w-[13px]" />

      <div className="ml-auto flex h-[42px] w-[351px] items-center rounded-[6px] bg-[#22252f]">
        <span className="w-[108px] pl-[4px] text-center">Original</span>
        <span className="flex h-[35px] w-[153px] items-center justify-center rounded-[5px] bg-[#343743] font-medium text-white">TradingView</span>
        <span className="w-[90px] pr-[3px] text-center">Depth</span>
      </div>
      <svg viewBox="0 0 26 27" className="ml-[31px] h-[27px] w-[26px] text-[#6d6f75]" fill="none" stroke="currentColor" strokeWidth="2">
        <rect x="1" y="1" width="24" height="25" rx="1.500" />
        <path d="M1 8h24" />
      </svg>
      <svg viewBox="0 0 24 24" className="ml-[38px] mr-[32px] h-[24px] w-[24px] text-[#6d6f75]" fill="none" stroke="currentColor" strokeWidth="2">
        <path d="M1 8V1h7M1 1l7.500 7.500M16 1h7v7M23 1l-7.500 7.500M1 16v7h7M1 23l7.500-7.500M23 16v7h-7M23 23l-7.500-7.500" />
      </svg>
    </div>
  );
}

function ChartPanel() {
  return (
    <main className="flex w-[2550px] shrink-0 flex-col bg-[#111216]">
      <div className="flex h-[70px] items-center border-b border-[#26282d] pl-[28px] text-[24.3px] font-medium leading-none text-[#868b98]">
        <div className="relative flex h-full w-[93px] items-center font-semibold text-white">
          Chart
          <div className="absolute -bottom-px left-0 h-[5px] w-[66px] bg-white shadow-[0_-3px_10px_rgba(255,255,255,0.35)]" />
        </div>
        <span className="w-[106px]">Analysis</span>
        <span className="flex h-[25px] w-[40px] items-center justify-center rounded-[5px] bg-[#c5d8fb] text-[#14161b]">
          <AiMark className="h-[19px] w-[30px]" />
        </span>
        <span className="ml-[28px] w-[73px]">Info</span>
        <span className="w-[187px]">Trading Rules</span>
        <span>Risk Limit</span>
        <svg viewBox="0 0 24 24" className="ml-auto mr-[30px] h-[24px] w-[24px] text-[#85878d]" fill="none" stroke="currentColor" strokeWidth="1.900">
          <path d="M1 19h22M4.500 19V9.500a7.500 7.500 0 0115 0V19M10 22.500h4M12 0v2" />
        </svg>
      </div>
      <div className="flex h-[64px] items-center border-b border-[#26282d] pl-[30px] text-[20.8px] font-semibold leading-none text-white">
        <AiMark className="h-[19px] w-[30px]" />
        <span className="ml-[14px]">Should I test small or go heavy on GRASS?</span>
      </div>
      <ChartToolbar />
      <div className="relative flex h-[1158px] pl-[14px]">
        <DrawingTools />
        <div className="flex w-[2438px] flex-col">
          <PriceChart />
          <div className="flex h-[66px] items-center bg-[#16171b] pl-[27px] pt-[3px] font-['Open_Sans',sans-serif] text-[23.4px] leading-none text-[#d5d6da]">
            <svg viewBox="0 0 32 32" className="h-[32px] w-[32px]" fill="none" stroke="currentColor" strokeWidth="1.800">
              <path d="M3 15V7a3 3 0 013-3h21a3 3 0 013 3v19a3 3 0 01-3 3H16M3 11h27M9 1v5M23 1v5M0 23h13M9 17l5 6-5 6" />
            </svg>
            <span className="ml-auto w-[221px] whitespace-nowrap tracking-[-0.1px]">04:59:20 (UTC+7)</span>
            <div className="h-[38px] w-[2px] bg-[#46474c]" />
            <span className="ml-[22px] w-[48px]">%</span>
            <span className="w-[57px]">log</span>
            <span className="w-[70px] text-[#4065f0]">Auto</span>
          </div>
        </div>
        <div className="absolute left-[95px] top-[1012px] flex h-[47px] w-[15px] items-center justify-center rounded-[7px] bg-[#3b434d] text-[#a9acb3]">
          <svg viewBox="0 0 6 12" className="h-[13px] w-[6px]" fill="none" stroke="currentColor" strokeWidth="1.500">
            <path d="M5 0L1 6l4 6" />
          </svg>
        </div>
      </div>
    </main>
  );
}

function Header() {
  return (
    <header className="ml-[7px] flex h-[91px] items-center bg-[#111216] pb-[3px] pl-[29px] pr-[20px]">
      <Star className="h-[28px] w-[28px] text-[#55575d]" strokeWidth={1.6} />
      <svg viewBox="0 0 42 42" className="ml-[15px] h-[42px] w-[42px]">
        <circle cx="21" cy="21" r="21" fill="#b4f050" />
        <path d="M8 33l1-6 3-2 1 3 3-1V17l4-5 1 8 1 4 3-12 5-2 2-1 1 3-2 2v12l-3 4-4 1-2-5-2 5-4 1-3-2-2 3-4 1z" fill="#14161b" />
        <path d="M19 15l-2 12M26 13l-4 13M12 28l-2 3" stroke="#b4f050" strokeWidth="1" />
      </svg>
      <span className="ml-[14px] w-[325px] whitespace-nowrap pb-[3px] text-[27.9px] font-semibold leading-none text-[#f3f4f6]">GRASSUSDT Perpetual</span>
      <Caret className="h-[11px] w-[18px] text-[#f3f4f6]" />
      <div className="ml-[29px] h-[70px] w-px bg-[#26282d]" />
      <span className="ml-[28px] w-[147px] pt-[2px] text-[35.300px] font-medium leading-none text-[#e8535f]">0.3626</span>
      {STATS.map((s) => (
        <div key={s.label} className={clsx('flex flex-col whitespace-pre text-[20.7px] leading-[22px]', s.cls)}>
          <span className="text-[#868b98]">{s.label}</span>
          <span className="mt-[16px] font-medium text-[#f3f4f6]">{s.value}</span>
        </div>
      ))}
      <Sliders className="ml-auto h-[28px] w-[28px] text-[#6d6f75]" />
    </header>
  );
}

export default function App() {
  return (
    <div className="flex h-[1466px] w-[3188px] flex-col overflow-hidden bg-black pt-[5px] font-['Inter',sans-serif]">
      <Header />
      <div className="mt-[7px] flex h-[1363px] gap-[6px] pl-[7px]">
        <ChartPanel />
        <OrderBook />
      </div>
    </div>
  );
}
